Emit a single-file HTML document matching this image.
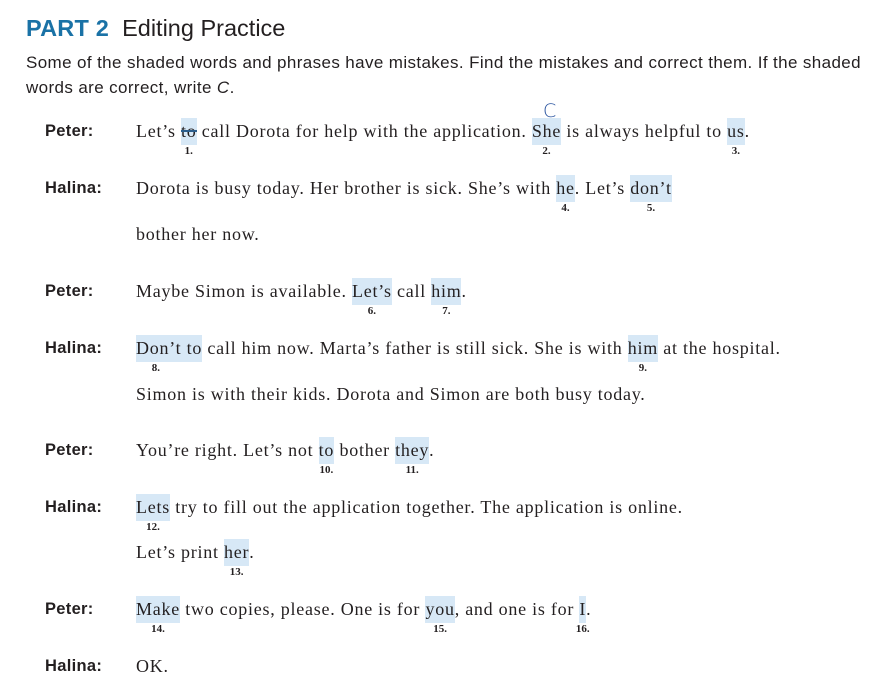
<!DOCTYPE html>
<html><head><meta charset="utf-8"><style>
body{margin:0;width:875px;height:680px;background:#fff;position:relative;overflow:hidden;color:#231f20}
.h{position:absolute;left:26px;top:15px;font-family:"Liberation Sans",sans-serif;font-size:23.5px;white-space:nowrap}
.h b{color:#1a72a6;font-weight:bold;letter-spacing:0.2px}
.intro{position:absolute;left:26px;top:50px;width:850px;font-family:"Liberation Sans",sans-serif;font-size:17px;letter-spacing:0.38px;line-height:25px}
.lb{position:absolute;left:45px;font-family:"Liberation Sans",sans-serif;font-weight:bold;font-size:16.5px;letter-spacing:0.3px}
.t{position:absolute;left:136px;font-family:"Liberation Serif",serif;font-size:18px;letter-spacing:0.75px;white-space:nowrap}
.s{position:relative;background:#d7e8f6;padding:3px 0 4px}
.s i{position:absolute;left:50%;transform:translateX(-50%);top:27px;font-style:normal;font-weight:bold;font-size:11px;letter-spacing:0}
.st{position:absolute;left:0;right:0;top:12px;height:1.5px;background:#2a5d8c}
</style></head><body>
<div class="h"><b>PART 2</b>&nbsp; Editing Practice</div>
<div class="intro">Some of the shaded words and phrases have mistakes. Find the mistakes and correct them. If the shaded words are correct, write <i>C</i>.</div>
<div style="position:absolute;left:543px;top:100px;font-family:'DejaVu Sans',sans-serif;font-size:19px;color:#2b55a0;font-weight:200">C</div>

<div class="lb" style="top:122px">Peter:</div>
<div class="t" style="top:121px">Let’s <span class="s">to<span class="st"></span><i>1.</i></span> call Dorota for help with the application. <span class="s">She<i>2.</i></span> is always helpful to <span class="s">us<i>3.</i></span>.</div>

<div class="lb" style="top:179px">Halina:</div>
<div class="t" style="top:178px">Dorota is busy today. Her brother is sick. She’s with <span class="s">he<i>4.</i></span>. Let’s <span class="s">don’t<i>5.</i></span></div>
<div class="t" style="top:224px">bother her now.</div>

<div class="lb" style="top:282px">Peter:</div>
<div class="t" style="top:281px">Maybe Simon is available. <span class="s">Let’s<i>6.</i></span> call <span class="s">him<i>7.</i></span>.</div>

<div class="lb" style="top:339px">Halina:</div>
<div class="t" style="top:338px"><span class="s">Don’t to<i style="left:30%">8.</i></span> call him now. Marta’s father is still sick. She is with <span class="s">him<i>9.</i></span> at the hospital.</div>
<div class="t" style="top:384px">Simon is with their kids. Dorota and Simon are both busy today.</div>

<div class="lb" style="top:441px">Peter:</div>
<div class="t" style="top:440px">You’re right. Let’s not <span class="s">to<i>10.</i></span> bother <span class="s">they<i>11.</i></span>.</div>

<div class="lb" style="top:498px">Halina:</div>
<div class="t" style="top:497px"><span class="s">Lets<i>12.</i></span> try to fill out the application together. The application is online.</div>
<div class="t" style="top:542px">Let’s print <span class="s">her<i>13.</i></span>.</div>

<div class="lb" style="top:600px">Peter:</div>
<div class="t" style="top:599px"><span class="s">Make<i>14.</i></span> two copies, please. One is for <span class="s">you<i>15.</i></span>, and one is for <span class="s">I<i>16.</i></span>.</div>

<div class="lb" style="top:657px">Halina:</div>
<div class="t" style="top:656px">OK.</div>
</body></html>
